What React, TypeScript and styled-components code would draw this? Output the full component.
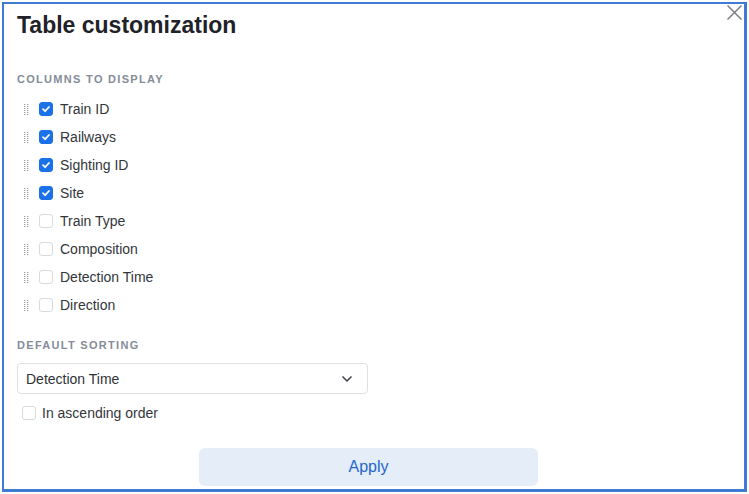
import React, { useState } from "react";
import styled, { createGlobalStyle } from "styled-components";

const Global = createGlobalStyle`
  html, body { margin: 0; padding: 0; background: #fff; }
  body { font-family: "Liberation Sans", Arial, sans-serif; color: #2b2e33; }
  * { box-sizing: border-box; }
`;

const Frame = styled.div`
  position: relative;
  margin: 2px 0 0 2px;
  width: 745px;
  height: 490px;
  border: 2px solid #3e7bd2;
  border-right-width: 3px;
  border-bottom-width: 3px;
  background: #fff;
  padding: 7px 0 0 13px;
  display: flex;
  flex-direction: column;
`;

const Title = styled.h1`
  margin: 0;
  font-size: 23px;
  line-height: 28px;
  font-weight: 700;
  color: #1f2228;
`;

const CloseButton = styled.button`
  position: absolute;
  top: 1px;
  right: 2px;
  width: 15px;
  height: 15px;
  border: none;
  background: none;
  padding: 0;
  display: flex;
  cursor: pointer;
`;

const SectionLabel = styled.div<{ $top: number }>`
  margin-top: ${(p) => p.$top}px;
  font-size: 11px;
  line-height: 14px;
  font-weight: 700;
  letter-spacing: 1.3px;
  color: #858c98;
`;

const List = styled.div`
  margin-top: 9px;
  display: flex;
  flex-direction: column;
`;

const Row = styled.label`
  height: 28px;
  display: flex;
  align-items: center;
  font-size: 14px;
  color: #33363b;
  cursor: pointer;
`;

const HandleSlot = styled.span`
  display: flex;
  margin: 0 10px 0 7px;
`;

const Box = styled.span<{ $checked: boolean; $gap?: number }>`
  width: 14px;
  height: 14px;
  border-radius: 3px;
  flex-shrink: 0;
  display: flex;
  align-items: center;
  justify-content: center;
  background: ${(p) => (p.$checked ? "#1b72e8" : "#fff")};
  border: 1px solid ${(p) => (p.$checked ? "#1b72e8" : "#d7dadf")};
  margin-right: ${(p) => p.$gap ?? 7}px;
`;

const Select = styled.div`
  margin-top: 11px;
  width: 351px;
  height: 31px;
  border: 1px solid #dcdfe3;
  border-radius: 4px;
  display: flex;
  align-items: center;
  justify-content: space-between;
  padding: 0 14px 0 8px;
  font-size: 14px;
  color: #2f3237;
`;

const AscRow = styled.label`
  margin-top: 9px;
  margin-left: 5px;
  height: 20px;
  display: flex;
  align-items: center;
  font-size: 14px;
  color: #33363b;
`;

const Footer = styled.div`
  margin-top: 25px;
  display: flex;
  padding-left: 182px;
`;

const ApplyButton = styled.button`
  width: 339px;
  height: 38px;
  border: none;
  border-radius: 6px;
  background: #e5edf8;
  color: #2467c9;
  font-family: inherit;
  font-size: 16px;
  cursor: pointer;
`;

const Check = () => (
  <svg width="10" height="10" viewBox="0 0 10 10">
    <path d="M2 5.2 L4.1 7.2 L8 3" fill="none" stroke="#fff" strokeWidth="1.8" strokeLinecap="round" strokeLinejoin="round" />
  </svg>
);

const DragHandle = () => (
  <svg width="5" height="11" viewBox="0 0 5 11">
    {[0, 2, 4, 6, 8, 10].map((y) => (
      <React.Fragment key={y}>
        <rect x="0" y={y} width="1.3" height="1" fill="#9a9ea5" />
        <rect x="3" y={y} width="1.3" height="1" fill="#9a9ea5" />
      </React.Fragment>
    ))}
  </svg>
);

const columns = [
  { name: "Train ID", on: true },
  { name: "Railways", on: true },
  { name: "Sighting ID", on: true },
  { name: "Site", on: true },
  { name: "Train Type", on: false },
  { name: "Composition", on: false },
  { name: "Detection Time", on: false },
  { name: "Direction", on: false },
];

export default function App() {
  const [cols] = useState(columns);
  return (
    <>
      <Global />
      <Frame>
        <Title>Table customization</Title>
        <CloseButton aria-label="Close">
          <svg width="15" height="15" viewBox="0 0 15 15">
            <path d="M0.5 0.5 L14.5 14.5 M14.5 0.5 L0.5 14.5" stroke="#7b7e83" strokeWidth="1.5" />
          </svg>
        </CloseButton>
        <SectionLabel $top={33}>COLUMNS TO DISPLAY</SectionLabel>
        <List>
          {cols.map((c) => (
            <Row key={c.name}>
              <HandleSlot>
                <DragHandle />
              </HandleSlot>
              <Box $checked={c.on}>{c.on && <Check />}</Box>
              {c.name}
            </Row>
          ))}
        </List>
        <SectionLabel $top={19}>DEFAULT SORTING</SectionLabel>
        <Select>
          <span>Detection Time</span>
          <svg width="12" height="8" viewBox="0 0 12 8">
            <path d="M1.5 1.5 L6 6 L10.5 1.5" fill="none" stroke="#3a3d42" strokeWidth="1.5" />
          </svg>
        </Select>
        <AscRow>
          <Box $checked={false} $gap={6}></Box>
          In ascending order
        </AscRow>
        <Footer>
          <ApplyButton>Apply</ApplyButton>
        </Footer>
      </Frame>
    </>
  );
}
